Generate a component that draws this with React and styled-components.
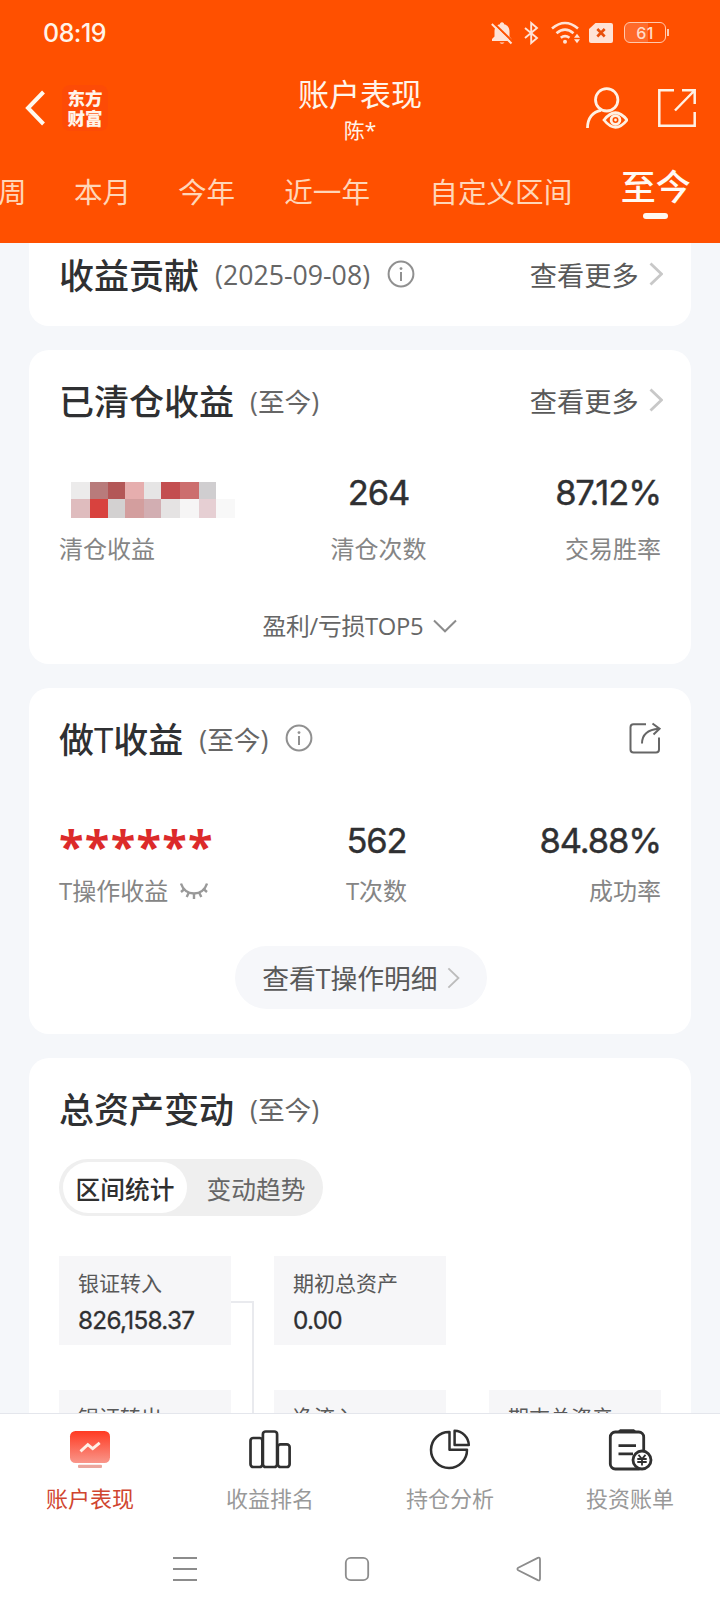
import React from 'react';
import styled, { createGlobalStyle } from 'styled-components';

const GlobalStyle = createGlobalStyle`
    * { box-sizing: border-box; }

    body {
        margin: 0;
        background: #f5f7fa;
        font-family: "Open Sans", "Noto Sans CJK SC", sans-serif;
        color: #2f3032;
    }

    svg { display: block; flex: none; }
`;

const tabs = [
    { name: '周', gap: 47.4 },
    { name: '本月', gap: 46.8 },
    { name: '今年', gap: 49 },
    { name: '近一年', gap: 59.3 },
    { name: '自定义区间', gap: 48.5 },
    { name: '至今', gap: 0, active: true },
];

// hidden profit, drawn as two rows of blurred blocks
const mosaic = [
    '#ecebeb', '#b87b7b', '#b35757', '#e6aeae', '#e6e5e5', '#c34e50', '#cc6e6e', '#d0ced0', '#ffffff',
    '#dfbcbe', '#d8423e', '#d3d1d1', '#d39e9e', '#d2aeb2', '#e5e3e3', '#f6f5f5', '#e6cfd3', '#f8f8f8',
];

/********************** Icons ***********************/
const BellOffIcon = () => (
    <svg width="22" height="24" viewBox="0 0 22 24">
        <path d="M1 20V18L3.5 15.5V10.5C3.5 6.5 5.8 4 9 3.3V2.5Q11 .2 13 2.5V3.3C16.5 4 18.5 6.8 18.5 10.5V15.5L20.5 18V20Z" fill="#ffe3d6" />
        <path d="M8.5 21.5H13.5Q11 24 8.5 21.5Z" fill="#ffe3d6" />
        <path d="M2 1.5L22 21" stroke="#ff5000" strokeWidth="2.2" />
        <path d="M.8 3L20.5 22.5" stroke="#ffe3d6" strokeWidth="2" />
    </svg>
);

const BluetoothIcon = () => (
    <svg width="15" height="24" viewBox="0 0 15 24" fill="none" stroke="#ffe3d6" strokeWidth="1.9">
        <path d="M1 7L13 17L7.2 22V2L13 7L1 17" />
    </svg>
);

const WifiIcon = () => (
    <svg width="30" height="24" viewBox="0 0 30 24" fill="none" stroke="#ffe3d6" strokeWidth="2.6">
        <path d="M1 7.5Q14 -3.5 27 7.5" />
        <path d="M5.5 12.3Q14 5 22.5 12.3" />
        <path d="M9.8 16.8Q14 13.4 18.5 16.8" />
        <circle cx="14" cy="20.8" r="2" fill="#ffe3d6" stroke="none" />
        <path d="M23 16.7L26 12.8L29 16.7ZM23 18.3L26 22.3L29 18.3Z" fill="#ffe3d6" stroke="none" />
    </svg>
);

const SimIcon = () => (
    <svg width="24" height="20" viewBox="0 0 24 20">
        <path d="M6.5 0H22Q24 0 24 2V18Q24 20 22 20H2Q0 20 0 18V6Z" fill="#ffe3d6" />
        <path d="M8.3 6L15.7 13.5M15.7 6L8.3 13.5" stroke="#e8500c" strokeWidth="2.6" />
    </svg>
);

const BackIcon = () => (
    <svg width="20" height="36" viewBox="0 0 20 36" fill="none" stroke="#fff8ee" strokeWidth="4">
        <path d="M18.5 2L3 18L18.5 34" />
    </svg>
);

const WatcherIcon = () => (
    <svg width="42" height="42" viewBox="0 0 42 42" fill="none" stroke="#fff1e4" strokeWidth="2.8">
        <circle cx="20.7" cy="12.8" r="11.2" />
        <path d="M1.5 41C1.5 31 7 24.5 15 23.3" />
        <path d="M18 33Q29.5 18.5 41 33Q29.5 47.5 18 33Z" />
        <circle cx="29.5" cy="33" r="4.4" />
        <circle cx="29.5" cy="33" r="1.4" fill="#fff1e4" stroke="none" />
    </svg>
);

const ExportIcon = () => (
    <svg width="40" height="40" viewBox="0 0 40 40" fill="none" stroke="#fff1e4" strokeWidth="2.5">
        <path d="M17 2.3H2.3V37.7H37.7V24" />
        <path d="M25 2.3H37.7V16M37 3L18 22.5" />
    </svg>
);

const InfoIcon = () => (
    <svg width="28" height="28" viewBox="0 0 28 28" fill="none" stroke="#909090" strokeWidth="2">
        <circle cx="14" cy="14" r="12.4" />
        <path d="M14 12V21" />
        <circle cx="14" cy="8.6" r="1.4" fill="#909090" stroke="none" />
    </svg>
);

const ChevronRight = ({ size = 24, color = '#c8c8c8', weight = 2.8 }) => (
    <svg width={size * 0.6} height={size} viewBox="0 0 14.4 24" fill="none" stroke={color} strokeWidth={weight}>
        <path d="M1.5 1.5L12.5 12L1.5 22.5" />
    </svg>
);

const ChevronDown = () => (
    <svg width="24" height="14" viewBox="0 0 24 14" fill="none" stroke="#8c8c8c" strokeWidth="2">
        <path d="M1 1.5L12 12.3L23 1.5" />
    </svg>
);

const ShareIcon = () => (
    <svg width="32" height="32" viewBox="0 0 32 32" fill="none" stroke="#666" strokeWidth="2">
        <path d="M17 2.2H4.5Q1.5 2.2 1.5 5.2V27.5Q1.5 30.5 4.5 30.5H27Q30 30.5 30 27.5V15.5" />
        <path d="M13 21.5Q13 8 30 6.7" />
        <path d="M23.5 1.5L30.5 6.7L24.5 12.5" />
    </svg>
);

const ClosedEyeIcon = () => (
    <svg width="28" height="18" viewBox="0 0 28 18" fill="none" stroke="#999" strokeWidth="2.4">
        <path d="M1 1.5Q4 11 14 11.5Q24 11 27 1.5" />
        <path d="M4.5 7L1 10M9 10.3L6.7 15M14 11.5V17M19 10.3L21.3 15M23.5 7L27 10" />
    </svg>
);

const PerformanceIcon = () => (
    <svg width="48" height="48" viewBox="0 0 48 48">
        <defs>
            <linearGradient id="perf" x1="0" y1="0" x2="0" y2="1">
                <stop offset="0" stopColor="#ff3a22" />
                <stop offset="1" stopColor="#f9968a" />
            </linearGradient>
        </defs>
        <rect x="4" y="5" width="40" height="32" rx="5.5" fill="url(#perf)" />
        <rect x="12" y="38.8" width="24" height="3.2" rx="1" fill="#eba69d" />
        <path d="M14.5 25.3L21.8 18.7L26.7 22.7L33.7 16.8" fill="none" stroke="#fff0e6" strokeWidth="2.9" />
    </svg>
);

const RankIcon = () => (
    <svg width="48" height="48" viewBox="0 0 48 48" fill="none" stroke="#303030" strokeWidth="2.7">
        <rect x="4.5" y="12" width="11.9" height="29" rx="2.8" />
        <rect x="16.9" y="5.5" width="14.2" height="35.5" rx="2.8" />
        <rect x="31.8" y="18.3" width="11.8" height="22.7" rx="2.8" />
    </svg>
);

const PieIcon = () => (
    <svg width="48" height="48" viewBox="0 0 48 48" fill="none" stroke="#303030" strokeWidth="2.5" strokeLinejoin="round">
        <path d="M23.5 6A18 18 0 1 0 41 23.7H23.5Z" />
        <path d="M28.6 4.7V19H42.8A14.6 14.6 0 0 0 28.6 4.7Z" />
    </svg>
);

const BillIcon = () => (
    <svg width="48" height="48" viewBox="0 0 48 48" fill="none" stroke="#303030" strokeWidth="2.8">
        <path d="M14 3.3H28L31 6H11Z" fill="#303030" stroke="none" />
        <rect x="4.3" y="6" width="33.4" height="37" rx="5" />
        <path d="M12.5 19.6H30M12.5 27.8H27" />
        <circle cx="36" cy="34" r="9" fill="#fff" />
        <path d="M32.5 28.8L36 33L39.5 28.8M36 33V39.5M31.3 33H40.7M31.3 36H40.7" strokeWidth="1.8" />
    </svg>
);

const navs = [
    { name: '账户表现', icon: <PerformanceIcon />, active: true },
    { name: '收益排名', icon: <RankIcon /> },
    { name: '持仓分析', icon: <PieIcon /> },
    { name: '投资账单', icon: <BillIcon /> },
];

/********************** Parts ***********************/
const CardTitle = ({ title, range, info, children }) => (
    <CardHead>
        <h2>{title}</h2>
        <span>({range})</span>
        {info && <InfoIcon />}
        <HeadAction>{children}</HeadAction>
    </CardHead>
);

const More = () => (
    <MoreLink>
        查看更多
        <ChevronRight />
    </MoreLink>
);

const AmountBox = ({ label, value }) => (
    <Amount>
        <p>{label}</p>
        <strong>{value}</strong>
    </Amount>
);

export default function App() {
    return (
        <Screen>
            <GlobalStyle />

            <Header>
                <StatusBar>
                    <Clock>08:19</Clock>
                    <StatusIcons>
                        <BellOffIcon />
                        <BluetoothIcon />
                        <WifiIcon />
                        <SimIcon />
                        <Battery>61</Battery>
                    </StatusIcons>
                </StatusBar>

                <TitleBar>
                    <TitleLeft>
                        <BackIcon />
                        <Logo>
                            <span>东方</span>
                            <span>财富</span>
                        </Logo>
                    </TitleLeft>
                    <TitleText>
                        <h1>账户表现</h1>
                        <p>陈*</p>
                    </TitleText>
                    <TitleRight>
                        <WatcherIcon />
                        <ExportIcon />
                    </TitleRight>
                </TitleBar>

                <Tabs>
                    {tabs.map((t) => <Tab key={t.name} $gap={t.gap} $active={t.active}>{t.name}</Tab>)}
                </Tabs>
            </Header>

            <Content>
                <Card>
                    <CardTitle title="收益贡献" range="2025-09-08" info><More /></CardTitle>
                </Card>

                <Card>
                    <CardTitle title="已清仓收益" range="至今"><More /></CardTitle>
                    <Stats $top={47} $gap={18} $mid={137}>
                        <Stat $align="flex-start">
                            <Mosaic>{mosaic.map((c, i) => <Block key={i} $color={c} />)}</Mosaic>
                            <Label>清仓收益</Label>
                        </Stat>
                        <Stat $align="center">
                            <Figure>264</Figure>
                            <Label>清仓次数</Label>
                        </Stat>
                        <Stat $align="flex-end">
                            <Figure>87.12%</Figure>
                            <Label>交易胜率</Label>
                        </Stat>
                    </Stats>
                    <Expand>盈利/亏损TOP5 <ChevronDown /></Expand>
                </Card>

                <Card>
                    <CardTitle title="做T收益" range="至今" info><ShareIcon /></CardTitle>
                    <Stats $top={57} $gap={12} $mid={133}>
                        <Stat $align="flex-start">
                            <Masked>******</Masked>
                            <Label>T操作收益 <ClosedEyeIcon /></Label>
                        </Stat>
                        <Stat $align="center">
                            <Figure>562</Figure>
                            <Label>T次数</Label>
                        </Stat>
                        <Stat $align="flex-end">
                            <Figure>84.88%</Figure>
                            <Label>成功率</Label>
                        </Stat>
                    </Stats>
                    <DetailButton>
                        查看T操作明细
                        <ChevronRight size={22} color="#bcbcbc" weight={2} />
                    </DetailButton>
                </Card>

                <Card>
                    <CardTitle title="总资产变动" range="至今" />
                    <Switch>
                        <SwitchItem $on>区间统计</SwitchItem>
                        <SwitchItem>变动趋势</SwitchItem>
                    </Switch>
                    <FlowGrid>
                        <AmountBox label="银证转入" value="826,158.37" />
                        <Connector />
                        <AmountBox label="期初总资产" value="0.00" />
                        <Spacer />
                        <AmountBox label="银证转出" />
                        <AmountBox label="净流入" />
                        <Gap />
                        <AmountBox label="期末总资产" />
                    </FlowGrid>
                </Card>
            </Content>

            <BottomNav>
                {navs.map((n) => (
                    <NavItem key={n.name} $active={n.active}>
                        {n.icon}
                        {n.name}
                    </NavItem>
                ))}
            </BottomNav>

            <SystemBar>
                <svg width="26" height="26" viewBox="0 0 26 26" stroke="#8c8c8c" strokeWidth="2">
                    <path d="M1 2H25M1 13H25M1 24H25" />
                </svg>
                <svg width="26" height="26" viewBox="0 0 26 26" fill="none" stroke="#8c8c8c" strokeWidth="1.8">
                    <rect x="1.8" y="1.8" width="22.4" height="22.4" rx="5" />
                </svg>
                <svg width="26" height="26" viewBox="0 0 26 26" fill="none" stroke="#8c8c8c" strokeWidth="1.8" strokeLinejoin="round">
                    <path d="M2.2 11.8L21.8 1.9Q24 1 24 3.5V22.5Q24 25 21.8 24.1L2.2 14.2Q.6 13 2.2 11.8Z" />
                </svg>
            </SystemBar>
        </Screen>
    );
}

/********************** Header ***********************/
const Screen = styled.div`
    width: 720px;
    height: 1612px;
    display: flex;
    flex-direction: column;
    overflow: hidden;
`;

const Header = styled.header`
    flex: none;
    height: 243px;
    background: #ff5000;
    color: #fff4ea;
`;

const StatusBar = styled.div`
    height: 65px;
    padding: 0 51px 0 43px;
    display: flex;
    align-items: center;
    justify-content: space-between;
`;

const Clock = styled.div`
    font-family: Inter, sans-serif;
    font-size: 25px;
    font-weight: 500;
    letter-spacing: -0.5px;
`;

const StatusIcons = styled.div`
    display: flex;
    align-items: center;

    svg:nth-child(1) { margin-right: 11px; }
    svg:nth-child(2) { margin-right: 12px; }
    svg:nth-child(3) { margin-right: 8px; }
    svg:nth-child(4) { margin-right: 11px; }
`;

const Battery = styled.div`
    width: 42px;
    height: 21px;
    position: relative;
    margin-right: 3px;

    display: flex;
    align-items: center;
    justify-content: center;

    font-family: Inter, sans-serif;
    font-size: 16px;
    font-weight: 500;
    letter-spacing: 0.5px;
    color: #ffdccb;
    border: 1.5px solid #ffc9ae;
    border-radius: 6px;
    background: linear-gradient(90deg, #ff6a2a 58%, transparent 58%);

    &::after {
        content: "";
        position: absolute;
        right: -4px;
        width: 2px;
        height: 7px;
        background: #ffc9ae;
    }
`;

const TitleBar = styled.div`
    height: 85px;
    padding: 0 23px 0 25px;
    display: grid;
    grid-template-columns: 1fr auto 1fr;
    align-items: center;
`;

const TitleLeft = styled.div`
    display: flex;
    align-items: center;
    gap: 17px;
`;

const Logo = styled.div`
    width: 46px;
    height: 46px;
    padding-top: 3px;
    display: flex;
    flex-direction: column;
    align-items: center;

    font-family: "Noto Sans CJK SC", sans-serif;
    font-size: 17.5px;
    font-weight: 900;
    line-height: 20px;
    border-radius: 8px;
    background: #fd4b06;
`;

const TitleText = styled.div`
    text-align: center;
    padding: 3px 2px 0 0;

    h1 {
        margin: 0;
        font-size: 31px;
        font-weight: 400;
        line-height: 42px;
    }

    p {
        margin: 0;
        font-size: 21px;
        line-height: 30px;
    }
`;

const TitleRight = styled.div`
    display: flex;
    align-items: center;
    justify-content: flex-end;
    gap: 29px;
`;

const Tabs = styled.div`
    height: 93px;
    margin-left: -2px;
    display: flex;
    align-items: flex-start;
    white-space: nowrap;
`;

const Tab = styled.div`
    flex: none;
    margin-right: ${(p) => p.$gap}px;
    padding-top: ${(p) => (p.$active ? 17 : 22)}px;
    font-size: ${(p) => (p.$active ? 35 : 28.6)}px;
    font-weight: ${(p) => (p.$active ? 500 : 400)};
    line-height: 40px;
    color: ${(p) => (p.$active ? '#fffaf4' : '#ffd6b8')};

    &::after {
        content: "";
        display: ${(p) => (p.$active ? 'block' : 'none')};
        width: 25px;
        height: 6px;
        margin: 6px auto 0;
        border-radius: 3px;
        background: #fff8f0;
    }
`;

/********************** Cards ***********************/
// the list is scrolled, so the first card starts under the header
const Content = styled.main`
    flex: none;
    height: 1170px;
    padding: 0 29px;
    overflow: hidden;
    display: flex;
    flex-direction: column;
    gap: 24px;

    > :first-child {
        height: 102px;
        margin-top: -19px;
    }
`;

const Card = styled.section`
    flex: none;
    padding: 26px 30px 24px;
    border-radius: 20px;
    background: #fff;
`;

const CardHead = styled.div`
    height: 48px;
    display: flex;
    align-items: center;

    h2 {
        margin: 0 16px 0 0;
        padding-top: 4px;
        font-size: 35px;
        font-weight: 500;
        line-height: 48px;
    }

    > span {
        font-size: 26.7px;
        color: #666;
        margin-right: 17px;
    }
`;

const HeadAction = styled.div`
    margin-left: auto;
`;

const MoreLink = styled.div`
    margin-right: -2px;
    display: flex;
    align-items: center;
    gap: 10px;

    font-size: 27.2px;
    color: #595959;
`;

const Stats = styled.div`
    margin-top: ${(p) => p.$top}px;
    display: grid;
    grid-template-columns: 251px ${(p) => p.$mid}px 1fr;

    > div { gap: ${(p) => p.$gap}px; }
`;

const Stat = styled.div`
    display: flex;
    flex-direction: column;
    align-items: ${(p) => p.$align};
`;

const Figure = styled.div`
    font-family: Inter, sans-serif;
    font-size: 34.5px;
    font-weight: 400;
    line-height: 44px;
    letter-spacing: -1.1px;
    -webkit-text-stroke: 0.4px #2f3032;
`;

const Label = styled.div`
    display: flex;
    align-items: center;
    gap: 12px;

    font-size: 24px;
    line-height: 32px;
    color: #858585;
`;

const Masked = styled.div`
    height: 44px;
    padding-top: 5px;
    font-size: 45px;
    font-weight: 700;
    line-height: 44px;
    letter-spacing: 1.3px;
    color: #dc2a2a;
`;

const Mosaic = styled.div`
    height: 44px;
    padding: 11px 0 0 12px;
    display: grid;
    grid-template-columns: 19px 18px 17px 19px 17px 19px 19px 17px 19px;
    grid-template-rows: 17px 19px;
`;

const Block = styled.i`
    background: ${(p) => p.$color};
`;

const Expand = styled.div`
    margin-top: 45px;
    margin-bottom: -2px;
    display: flex;
    align-items: center;
    justify-content: center;
    gap: 10px;

    font-size: 23.8px;
    line-height: 32px;
    letter-spacing: -0.3px;
    color: #666;
`;

const DetailButton = styled.div`
    width: 252px;
    height: 63px;
    margin: 39px 0 1px 176px;
    display: flex;
    align-items: center;
    justify-content: center;
    gap: 9px;

    font-size: 26.8px;
    color: #595959;
    border-radius: 32px;
    background: #f6f7fa;
`;

const Switch = styled.div`
    width: 264px;
    height: 57px;
    margin-top: 27px;
    padding: 3px 4px;
    display: flex;
    border-radius: 29px;
    background: #efefef;
`;

const SwitchItem = styled.div`
    width: ${(p) => (p.$on ? 124 : 132)}px;
    padding-top: 1px;
    padding-left: ${(p) => (p.$on ? 0 : 6)}px;
    display: flex;
    align-items: center;
    justify-content: center;

    font-size: 24.7px;
    font-weight: ${(p) => (p.$on ? 500 : 400)};
    color: ${(p) => (p.$on ? '#303030' : '#666')};
    border-radius: 26px;
    background: ${(p) => (p.$on ? '#fff' : 'none')};
`;

const FlowGrid = styled.div`
    margin-top: 40px;
    display: grid;
    grid-template-columns: 172px 43px 172px 43px 172px;
    grid-template-rows: 89px 89px;
    row-gap: 45px;
`;

const Amount = styled.div`
    padding: 11px 0 0 19px;
    background: #f6f6f8;

    p {
        margin: 0;
        font-size: 21px;
        line-height: 32px;
        color: #595959;
    }

    strong {
        display: block;
        margin-top: 4px;
        font-family: Inter, sans-serif;
        font-size: 24.3px;
        font-weight: 400;
        line-height: 34px;
        letter-spacing: -0.7px;
        -webkit-text-stroke: 0.3px #2f3032;
    }
`;

const Connector = styled.div`
    grid-row: 1 / 3;
    grid-column: 2;
    width: 23px;
    margin-top: 45px;
    border: solid #e9eaee;
    border-width: 2px 2px 0 0;
`;

const Spacer = styled.div`
    grid-column: 4 / 6;
`;

const Gap = styled.div`
    grid-column: 4;
`;

/********************** Bottom ***********************/
const BottomNav = styled.nav`
    flex: none;
    height: 112px;
    padding-top: 12px;
    display: grid;
    grid-template-columns: repeat(4, 1fr);
    border-top: 1px solid #e4e6ec;
    background: #fff;
`;

const NavItem = styled.div`
    display: flex;
    flex-direction: column;
    align-items: center;
    gap: 8px;

    font-size: 22px;
    line-height: 32px;
    color: ${(p) => (p.$active ? '#d0452f' : '#999')};
`;

const SystemBar = styled.div`
    flex: none;
    height: 87px;
    padding: 0 178px 0 172px;
    display: flex;
    align-items: center;
    justify-content: space-between;
    background: #fff;
`;
